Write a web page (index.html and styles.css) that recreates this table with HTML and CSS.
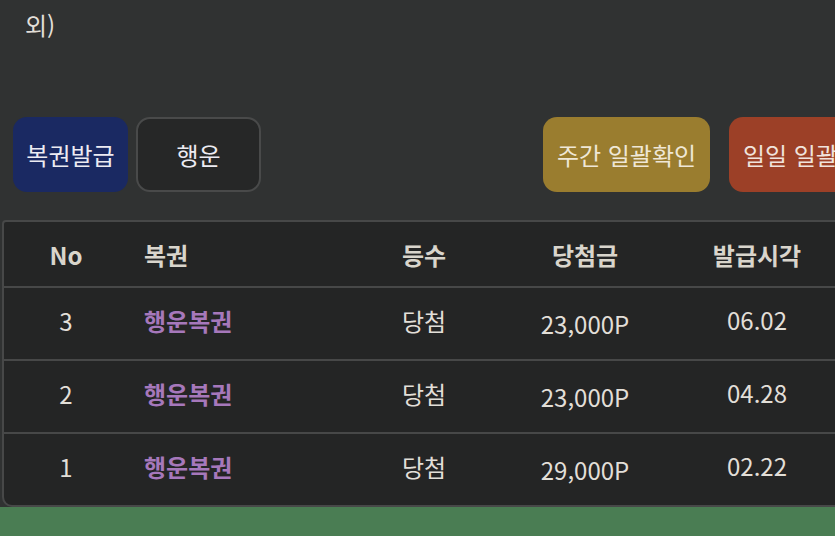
FILE: index.html
```html
<!DOCTYPE html>
<html lang="ko">
<head>
<meta charset="utf-8">
<link rel="stylesheet" href="styles.css">
</head>
<body>
<div class="page">
  <p class="note">외)</p>
  <div class="actions">
    <div class="group">
      <button class="btn btn-blue">복권발급</button>
      <button class="btn btn-dark">행운</button>
    </div>
    <div class="group group-right">
      <button class="btn btn-gold">주간 일괄확인</button>
      <button class="btn btn-red">일일 일괄확인</button>
    </div>
  </div>
  <div class="table">
    <div class="row head">
      <div class="c c-no">No</div>
      <div class="c c-name">복권</div>
      <div class="c c-rank">등수</div>
      <div class="c c-amt">당첨금</div>
      <div class="c c-date">발급시각</div>
    </div>
    <div class="row">
      <div class="c c-no">3</div>
      <div class="c c-name lotto">행운복권</div>
      <div class="c c-rank">당첨</div>
      <div class="c c-amt">23,000P</div>
      <div class="c c-date">06.02</div>
    </div>
    <div class="row">
      <div class="c c-no">2</div>
      <div class="c c-name lotto">행운복권</div>
      <div class="c c-rank">당첨</div>
      <div class="c c-amt">23,000P</div>
      <div class="c c-date">04.28</div>
    </div>
    <div class="row last">
      <div class="c c-no">1</div>
      <div class="c c-name lotto">행운복권</div>
      <div class="c c-rank">당첨</div>
      <div class="c c-amt">29,000P</div>
      <div class="c c-date">02.22</div>
    </div>
  </div>
  <div class="footer"></div>
</div>
</body>
</html>
```

FILE: styles.css
```css
html, body {
  margin: 0;
  padding: 0;
  background: #303232;
  overflow: hidden;
}
body {
  font-family: "Noto Sans CJK KR", "Noto Sans", sans-serif;
  color: #e2dfd8;
  width: 835px;
  height: 536px;
}
.page {
  width: 835px;
  height: 536px;
  overflow: hidden;
  display: flex;
  flex-direction: column;
}
.note {
  margin: 0;
  padding: 6px 0 0 25px;
  height: 117px;
  box-sizing: border-box;
  font-size: 24px;
  line-height: 38px;
  color: #e2dfd8;
}
.actions {
  display: flex;
  width: 909px;
  padding: 0 13px;
  box-sizing: border-box;
  height: 75px;
  flex-shrink: 0;
}
.group {
  display: flex;
  gap: 8px;
}
.group-right {
  margin-left: auto;
  gap: 19px;
}
.btn {
  font-family: inherit;
  font-size: 24px;
  height: 75px;
  border: none;
  border-radius: 14px;
  color: #ecebf2;
  padding: 0;
  white-space: nowrap;
  cursor: pointer;
}
.btn-blue {
  background: #1a2962;
  width: 115px;
}
.btn-dark {
  background: #262727;
  border: 2px solid #494a4a;
  width: 125px;
}
.btn-gold {
  background: #9a7d2f;
  color: #efe7d6;
  width: 167px;
}
.btn-red {
  background: #9c4027;
  color: #f0e3dc;
  width: 167px;
}
.table {
  margin: 28px 0 0 2px;
  width: 880px;
  background: #242525;
  border: 2px solid #474848;
  border-radius: 4px 4px 0 10px;
  flex-shrink: 0;
}
.row {
  display: grid;
  grid-template-columns: 124px 236px 120px 202px 142px 1fr;
  height: 64px;
  padding-bottom: 7px;
  align-items: center;
  border-bottom: 2px solid #474848;
  font-size: 24px;
}
.row.head {
  height: 64px;
  padding-bottom: 0;
  font-weight: 700;
  color: #d9d5cc;
}
.row.last {
  border-bottom: none;
}
.c {
  text-align: center;
  white-space: nowrap;
}
.c-name {
  text-align: left;
  padding-left: 16px;
}
.lotto {
  color: #a678bb;
  font-weight: 700;
}
.row:not(.head) .c-amt {
  padding-top: 6px;
}
.row:not(.head) .c-date {
  padding-bottom: 2px;
}
.footer {
  flex: 1;
  background: #4a7d53;
}
```
